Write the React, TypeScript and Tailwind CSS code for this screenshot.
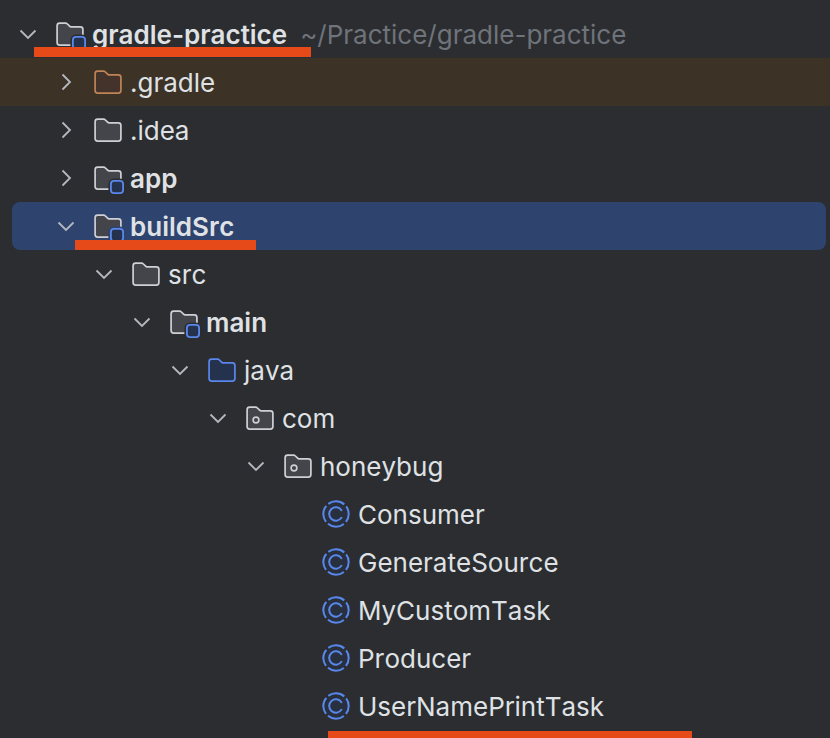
const BG = "#2b2d30";
const SEL = "#2e436e";

const FOLDER = "M3.6 3.2H9.6C10.3 3.2 10.9 3.5 11.4 4L13.6 6.2C14 6.6 14.5 6.8 15 6.8H24.4C25.9 6.8 26.9 7.8 26.9 9.3V22.6C26.9 24.1 25.9 25.1 24.4 25.1H3.6C2.1 25.1 1.1 24.1 1.1 22.6V5.7C1.1 4.2 2.1 3.2 3.6 3.2Z";

function Folder({ kind, cut }: { kind: "plain" | "module" | "orange" | "blue" | "package"; cut?: string }) {
  const stroke = kind === "orange" ? "#c08457" : kind === "blue" ? "#5a87ec" : "#ced0d6";
  const fill = kind === "orange" ? "#44332a" : kind === "blue" ? "#25324d" : "#43454a";
  return (
    <svg width="28" height="28" viewBox="0 0 28 28" className="shrink-0 overflow-visible">
      <path d={FOLDER} fill={fill} stroke={stroke} strokeWidth="1.7" />
      {kind === "package" && <circle cx="10" cy="16" r="2.9" fill="none" stroke={stroke} strokeWidth="1.6" />}
      {kind === "module" && (
        <rect x="16.9" y="16.9" width="12.2" height="12.2" rx="3.2" fill="#25324d" stroke={cut ?? BG} strokeWidth="5" />
      )}
      {kind === "module" && (
        <rect x="16.9" y="16.9" width="12.2" height="12.2" rx="3.2" fill="#25324d" stroke="#5a87ec" strokeWidth="1.8" />
      )}
    </svg>
  );
}

function ClassIcon() {
  return (
    <svg width="28" height="28" viewBox="0 0 28 28" className="shrink-0">
      <circle cx="14" cy="14" r="12.7" fill="#25324d" fillOpacity="0.45" stroke="none" />
      <circle cx="14" cy="14" r="12.7" fill="none" stroke="#5a87ec" strokeWidth="2" strokeDasharray="17.2 2.75" strokeDashoffset="-11.35" />
      <path d="M19.4 10.2A6.7 6.7 0 1 0 19.4 17.8" fill="none" stroke="#5a87ec" strokeWidth="2" strokeLinecap="round" />
    </svg>
  );
}

function Chevron({ open }: { open: boolean }) {
  return (
    <svg width="24" height="24" viewBox="0 0 24 24" className="shrink-0">
      <path d={open ? "M4.5 8.5L12 16L19.5 8.5" : "M8.5 4.5L16 12L8.5 19.5"} fill="none" stroke="#b4b8bf" strokeWidth="1.8" />
    </svg>
  );
}

type Row = {
  label: string;
  pad: string;
  open?: boolean;
  kind?: "plain" | "module" | "orange" | "blue" | "package";
  bold?: boolean;
  rowClass?: string;
  cut?: string;
  path?: string;
  bar?: string;
};

const rows: Row[] = [
  { label: "gradle-practice", pad: "pl-4", open: true, kind: "module", bold: true, path: "~/Practice/gradle-practice", bar: "left-[34px] top-[37px] w-[277px] h-[10px]" },
  { label: ".gradle", pad: "pl-[54px]", open: false, kind: "orange", rowClass: "bg-[#3d3226]" },
  { label: ".idea", pad: "pl-[54px]", open: false, kind: "plain" },
  { label: "app", pad: "pl-[54px]", open: false, kind: "module", bold: true },
  { label: "buildSrc", pad: "pl-[42px]", open: true, kind: "module", bold: true, cut: SEL, rowClass: "bg-[#2e436e] ml-3 mr-1 rounded-lg", bar: "left-[63px] top-[38px] w-[181px] h-[10px]" },
  { label: "src", pad: "pl-[92px]", open: true, kind: "plain" },
  { label: "main", pad: "pl-[130px]", open: true, kind: "module", bold: true },
  { label: "java", pad: "pl-[168px]", open: true, kind: "blue" },
  { label: "com", pad: "pl-[206px]", open: true, kind: "package" },
  { label: "honeybug", pad: "pl-[244px]", open: true, kind: "package" },
  { label: "Consumer", pad: "pl-[322px]" },
  { label: "GenerateSource", pad: "pl-[322px]" },
  { label: "MyCustomTask", pad: "pl-[322px]" },
  { label: "Producer", pad: "pl-[322px]" },
  { label: "UserNamePrintTask", pad: "pl-[322px]", bar: "left-[328px] top-[49px] w-[364px] h-[7px]" },
];

export default function App() {
  return (
    <div className="h-[738px] w-[830px] overflow-hidden bg-[#2b2d30] pt-[10px] font-['Inter',sans-serif] text-[26px] text-[#dfe1e5] [font-kerning:none]">
      {rows.map((r) => (
        <div key={r.label} className={`relative flex h-12 items-center ${r.pad} ${r.rowClass ?? ""}`}>
          {r.kind ? (
            <>
              <Chevron open={!!r.open} />
              <div className="ml-4">
                <Folder kind={r.kind} cut={r.cut} />
              </div>
            </>
          ) : (
            <ClassIcon />
          )}
          <span className={`ml-2 whitespace-nowrap ${r.bold ? "font-semibold" : ""}`}>{r.label}</span>
          {r.path && <span className="ml-[13px] whitespace-nowrap text-[#6f737a]">{r.path}</span>}
          {r.bar && <div className={`absolute bg-[#e64a19] ${r.bar}`} />}
        </div>
      ))}
    </div>
  );
}
